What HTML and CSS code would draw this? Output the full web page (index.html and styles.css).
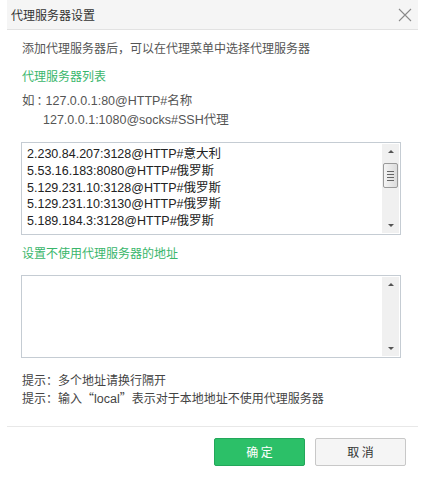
FILE: index.html
```html
<!DOCTYPE html>
<html lang="zh-CN">
<head>
<meta charset="utf-8">
<title>代理服务器设置</title>
<link rel="stylesheet" href="styles.css">
</head>
<body>
<div class="dialog">
  <div class="titlebar">
    <span class="title">代理服务器设置</span>
    <svg class="close" width="14" height="14" viewBox="0 0 14 14"><path d="M1 1L13 13M13 1L1 13" stroke="#8a8a8a" stroke-width="1.1" fill="none"/></svg>
  </div>
  <div class="content">
    <p class="intro">添加代理服务器后，可以在代理菜单中选择代理服务器</p>
    <p class="heading">代理服务器列表</p>
    <div class="example">
      <div class="ex-row"><span class="cjk">如</span><span class="colon">：</span>127.0.0.1:80@HTTP#<span class="cjk">名称</span></div>
      <div class="ex-row ex-indent">127.0.0.1:1080@socks#SSH<span class="cjk">代理</span></div>
    </div>
    <div class="box box-list">
      <div class="box-text">
        <div>2.230.84.207:3128@HTTP#意大利</div>
        <div>5.53.16.183:8080@HTTP#俄罗斯</div>
        <div>5.129.231.10:3128@HTTP#俄罗斯</div>
        <div>5.129.231.10:3130@HTTP#俄罗斯</div>
        <div>5.189.184.3:3128@HTTP#俄罗斯</div>
      </div>
      <div class="scrollbar">
        <span class="arrow up"></span>
        <div class="track">
          <div class="thumb"><i></i><i></i><i></i><i></i></div>
        </div>
        <span class="arrow down"></span>
      </div>
    </div>
    <p class="heading heading2">设置不使用代理服务器的地址</p>
    <div class="box box-bypass">
      <div class="box-text"></div>
      <div class="scrollbar">
        <span class="arrow up"></span>
        <div class="track"></div>
        <span class="arrow down"></span>
      </div>
    </div>
    <div class="hints">
      <p>提示：多个地址请换行隔开</p>
      <p>提示：输入<span class="q">“</span><span class="latin">local</span><span class="q">”</span>表示对于本地地址不使用代理服务器</p>
    </div>
  </div>
  <div class="footer">
    <button class="btn btn-ok">确 定</button>
    <button class="btn btn-cancel">取 消</button>
  </div>
</div>
</body>
</html>
```
FILE: styles.css
```css
* { box-sizing: border-box; }
body {
  margin: 0;
  background: #fff;
  font-family: "Liberation Sans", "Noto Sans CJK SC", sans-serif;
  color: #444;
}
p { margin: 0; }
.dialog {
  width: 411px;
  margin-left: 7px;
  height: 480px;
  background: #fff;
}
.titlebar {
  height: 30px;
  background: #f5f5f5;
  border-bottom: 1px solid #e2e2e2;
  display: flex;
  align-items: center;
  justify-content: space-between;
  padding: 0 6px 0 4px;
}
.title {
  font-family: "Noto Sans CJK SC", sans-serif;
  font-size: 12px;
  color: #333;
  line-height: 16px;
}
.close { display: block; }
.content {
  padding: 9px 17px 0 14px;
}
.intro, .heading, .hints {
  font-family: "Noto Sans CJK SC", sans-serif;
  font-size: 12px;
  line-height: 18px;
  padding-left: 1px;
}
.cjk { font-family: "Noto Sans CJK SC", sans-serif; }
.latin { font-family: "Liberation Sans", sans-serif; font-size: 12.5px; }
.intro { color: #555; }
.heading {
  color: #39b66b;
  margin-top: 10px;
}
.example {
  margin-top: 6px;
  color: #555;
  font-size: 12.5px;
  line-height: 18px;
  padding-left: 1px;
}
.ex-row { white-space: nowrap; }
.ex-indent { padding-left: 21px; }
.colon {
  font-family: "Noto Sans CJK SC", sans-serif;
  font-size: 12px;
  letter-spacing: -6px;
  padding: 0 3px 0 2px;
}
.q { font-feature-settings: "fwid" 1; }
.box {
  margin-top: 13px;
  border: 1px solid #c5ccd3;
  display: flex;
  background: #fff;
}
.box-list { height: 93px; }
.box-bypass { height: 83px; }
.box-text {
  flex: 1;
  padding: 3px 0 0 5px;
  font-size: 12.5px;
  line-height: 16.8px;
  color: #222;
  overflow: hidden;
}
.heading2 { margin-top: 9px; }
.scrollbar {
  width: 17px;
  flex: none;
  background: #f0f0f0;
  display: flex;
  flex-direction: column;
  align-items: center;
  margin: 1px 1px 1px 0;
}
.arrow {
  width: 0;
  height: 0;
  border-left: 3px solid transparent;
  border-right: 3px solid transparent;
  margin: 6px 0;
}
.arrow.up { border-bottom: 3px solid #555; }
.arrow.down { border-top: 3px solid #555; }
.track {
  flex: 1;
  width: 100%;
  padding-top: 4px;
  display: flex;
  justify-content: center;
}
.thumb {
  width: 15px;
  height: 25px;
  border: 1px solid #9a9a9a;
  border-radius: 2px;
  background: linear-gradient(to right, #f4f4f4, #dcdcdc);
  display: flex;
  flex-direction: column;
  align-items: center;
  justify-content: center;
  gap: 2px;
}
.thumb i {
  display: block;
  width: 7px;
  height: 1px;
  background: #666;
}
.hints {
  margin-top: 13px;
  color: #444;
}
.footer {
  margin-top: 18px;
  border-top: 1px solid #e8e8e8;
  padding: 11px 12px 0 0;
  display: flex;
  justify-content: flex-end;
  gap: 10px;
}
.btn {
  width: 91px;
  height: 28px;
  border-radius: 2px;
  font-family: "Noto Sans CJK SC", sans-serif;
  font-size: 12px;
  line-height: 16px;
  padding: 0;
  cursor: pointer;
}
.btn-ok {
  background: #2cc068;
  border: 1px solid #23a75a;
  color: #fff;
}
.btn-cancel {
  background: #f5f5f5;
  border: 1px solid #c8c8c8;
  color: #333;
}
```
